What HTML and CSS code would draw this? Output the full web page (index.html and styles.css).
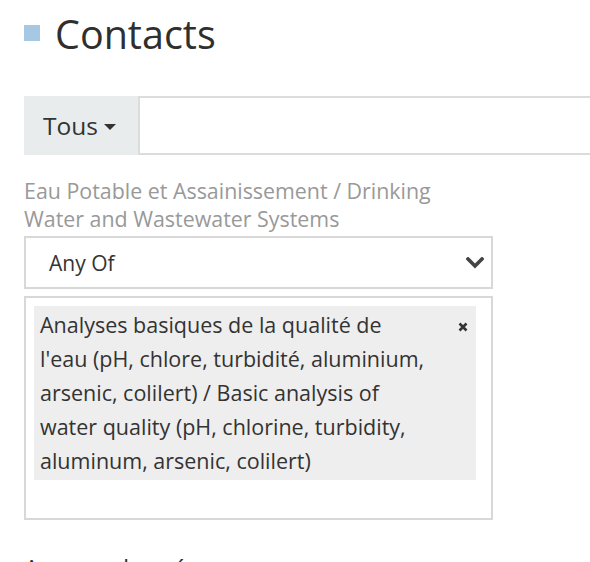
FILE: index.html
```html
<!DOCTYPE html>
<html>
<head>
<meta charset="utf-8">
<link rel="stylesheet" href="styles.css">
</head>
<body>
<div class="page">
  <h1 class="title"><span class="square"></span>Contacts</h1>
  <div class="input-group">
    <div class="addon">Tous<span class="caret"></span></div>
    <div class="search"></div>
  </div>
  <div class="label">Eau Potable et Assainissement / Drinking Water and Wastewater Systems</div>
  <div class="select">
    <span class="select-text">Any Of</span>
    <svg class="chevron" width="18" height="12" viewBox="0 0 18 12"><path d="M2 2 L9 9 L16 2" fill="none" stroke="#444" stroke-width="3.6" stroke-linecap="square" stroke-linejoin="miter"/></svg>
  </div>
  <div class="multi">
    <div class="tag">
      <span class="tag-text">Analyses basiques de la qualité de l'eau (pH, chlore, turbidité, aluminium, arsenic, colilert) / Basic analysis of water quality (pH, chlorine, turbidity, aluminum, arsenic, colilert)</span>
      <svg class="remove" width="10" height="10" viewBox="0 0 10 10"><path d="M1.5 1.5 L8.5 8.5 M8.5 1.5 L1.5 8.5" stroke="#333" stroke-width="2.6" stroke-linecap="butt"/></svg>
    </div>
  </div>
  <div class="empty">Aucune donnée</div>
</div>
</body>
</html>
```
FILE: styles.css
```css
html, body {
  margin: 0;
  padding: 0;
  overflow: hidden;
  background: #fff;
}
body {
  font-family: "Open Sans", "DejaVu Sans", sans-serif;
  color: #333;
}
.page {
  padding: 11px 0 0 24px;
  width: 700px;
}
.title {
  display: flex;
  align-items: center;
  margin: 0;
  font-size: 39.5px;
  font-weight: 400;
  line-height: 46px;
  color: #2f2f2f;
}
.square {
  width: 16px;
  height: 16px;
  background: #a6c8e2;
  margin-right: 15px;
  margin-top: -2px;
}
.input-group {
  display: flex;
  margin-top: 39px;
  height: 59px;
}
.addon {
  width: 114px;
  box-sizing: border-box;
  background: #e9eced;
  display: flex;
  align-items: center;
  padding-left: 19px;
  font-size: 24.5px;
  color: #333;
}
.caret {
  display: inline-block;
  width: 0;
  height: 0;
  border-top: 6px solid #333;
  border-left: 6px solid transparent;
  border-right: 6px solid transparent;
  margin-left: 6px;
  margin-top: 2px;
}
.search {
  flex: 1;
  border: 2px solid #dcdcdc;
}
.label {
  width: 436px;
  margin-top: 22px;
  font-size: 21.4px;
  line-height: 28px;
  color: #999;
}
.select {
  width: 469px;
  height: 53px;
  box-sizing: border-box;
  border: 2px solid #d8d8d8;
  margin-top: 3px;
  display: flex;
  align-items: center;
  justify-content: space-between;
  padding: 0 7px 0 23px;
  font-size: 21px;
  color: #333;
}
.chevron {
  display: block;
}
.multi {
  width: 469px;
  height: 224px;
  box-sizing: border-box;
  border: 2px solid #d8d8d8;
  margin-top: 7px;
  padding: 8px 15px 0 8px;
}
.tag {
  background: #eeeeee;
  display: flex;
  align-items: flex-start;
  justify-content: space-between;
  padding: 2px 8px 2px 6px;
}
.tag-text {
  width: 389px;
  font-size: 21.5px;
  line-height: 34px;
  color: #333;
}
.remove {
  margin-top: 14px;
  flex: none;
}
.empty {
  margin-top: 32px;
  font-size: 24px;
  line-height: 32px;
  color: #333;
}
```
